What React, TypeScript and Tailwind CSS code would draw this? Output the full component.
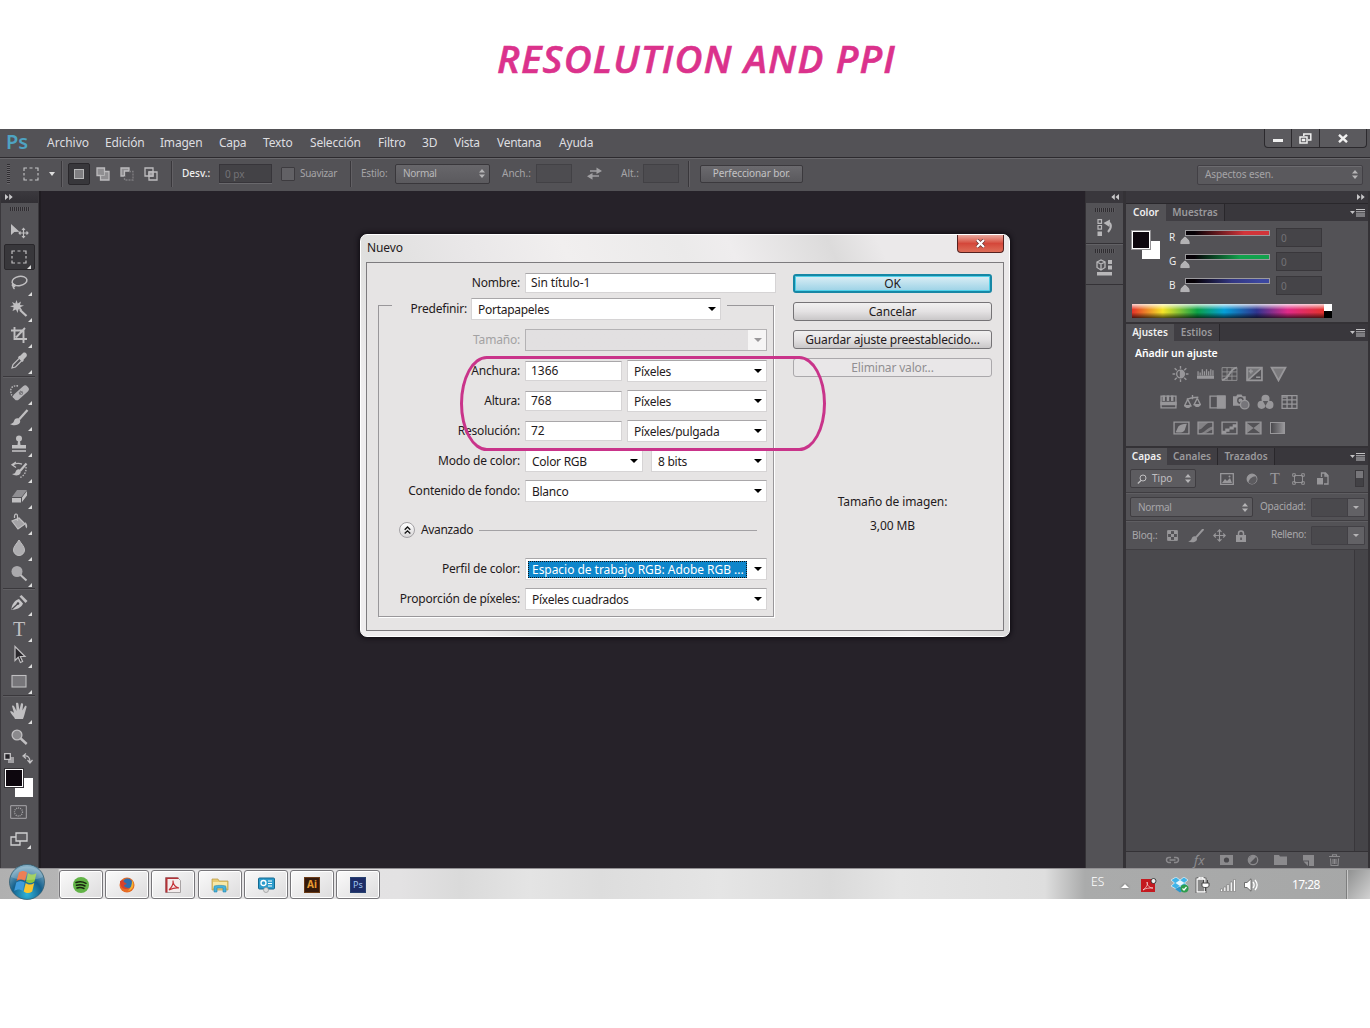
import React from "react";

type IconProps = { className?: string; box?: string; children: React.ReactNode };

/* Small line/fill icon that inherits the text colour. */
function Icon({ className = "w-5 h-5", box = "0 0 20 20", children }: IconProps) {
  return (
    <svg className={`shrink-0 ${className}`} viewBox={box} fill="none" stroke="currentColor" strokeWidth="1.3">
      {children}
    </svg>
  );
}

function Sorter() {
  return (
    <svg className="w-[6px] h-[9px] shrink-0 text-[#b5b4b6]" viewBox="0 0 6 9" fill="currentColor">
      <path d="M0 3.500L3 0l3 3.500zM0 5.500h6L3 9z" />
    </svg>
  );
}

function Chevrons({ left = false }: { left?: boolean }) {
  return (
    <svg className={`w-[8px] h-[6px] text-[#c9c8ca] ${left ? "rotate-180" : ""}`} viewBox="0 0 8 6" fill="currentColor">
      <path d="M0 0l3.500 3L0 6zM4.200 0l3.500 3-3.500 3z" />
    </svg>
  );
}

function Grip() {
  return <div className="h-[4px] w-[20px] bg-[repeating-linear-gradient(90deg,#2f2d31_0_1px,#5d5b5f_1px_2px)]" />;
}

function Rule() {
  return <div className="h-[26px] w-[2px] border-l border-[#39373b] border-r border-r-[#626064] box-border" />;
}

/* ---------- menu bar ---------- */

function MenuBar() {
  return (
    <div className="relative flex h-[28px] items-center bg-[#535256] text-[12px] text-[#dedee0]">
      <div className="w-[47px] pb-[2px] pl-[6px] text-[20px] leading-[24px] font-semibold text-[#4ea3c2] font-['Noto_Sans',sans-serif]">Ps</div>
      <div className="w-[58px]">Archivo</div>
      <div className="w-[55px] tracking-[-0.15px]">Edición</div>
      <div className="w-[59px] tracking-[-0.2px]">Imagen</div>
      <div className="w-[44px] tracking-[-0.3px]">Capa</div>
      <div className="w-[47px] tracking-[-0.15px]">Texto</div>
      <div className="w-[68px] tracking-[-0.2px]">Selección</div>
      <div className="w-[44px] tracking-[-0.2px]">Filtro</div>
      <div className="w-[32px]">3D</div>
      <div className="w-[43px] tracking-[-0.3px]">Vista</div>
      <div className="w-[62px] tracking-[-0.3px]">Ventana</div>
      <div className="tracking-[-0.2px]">Ayuda</div>
      <div className="ml-auto mr-[3px] flex h-[19px] self-start divide-x divide-[#2b292d] rounded-b-[4px] border border-t-0 border-[#2b292d] bg-[#5b5a5e] text-[#f1f1f1]">
        <div className="flex w-[27px] items-end justify-center pb-[5px]">
          <div className="h-[3px] w-[10px] bg-[#f1f1f1]" />
        </div>
        <div className="flex w-[28px] items-center justify-center">
          <Icon className="w-[13px] h-[11px]" box="0 0 13 11">
            <path d="M4.800 3V1h7v6H9M1 4h7v6H1zM3.500 6.500h2v1h-2z" strokeWidth="1.500" />
          </Icon>
        </div>
        <div className="flex w-[46px] items-center justify-center">
          <Icon className="w-[12px] h-[9px]" box="0 0 11 9">
            <path d="M1.500.8l8 7.400M9.500.8l-8 7.400" strokeWidth="2.400" />
          </Icon>
        </div>
      </div>
    </div>
  );
}

/* ---------- tool options bar ---------- */

function OptionsBar() {
  return (
    <div className="flex h-[34px] items-center border-t border-[#2d2b2f] bg-[#535256] pb-[2px] text-[10px] text-[#a5a4a7] shadow-[inset_0_1px_0_#68676b]">
      <div className="w-[17px] pl-[1px] ml-[6px]">
        <div className="h-[20px] w-[3px] bg-[repeating-linear-gradient(180deg,#2f2d31_0_1px,#68666a_1px_2px)]" />
      </div>
      <div className="w-[26px] text-[#c6c6c8]">
        <Icon className="w-[16px] h-[14px]" box="0 0 16 14">
          <path d="M1 4V1h3M6.500 1h3M12 1h3v3M15 6v2.500M15 10.500V13h-3M9.500 13h-3M4 13H1v-2.500M1 8.500V6" strokeWidth="1.100" />
        </Icon>
      </div>
      <div className="w-[12px]">
        <div className="h-0 w-0 border-x-[3px] border-t-[4px] border-x-transparent border-t-[#dedede]" />
      </div>
      <div className="w-[7px]"><Rule /></div>
      <div className="w-[28px]">
        <div className="flex h-[22px] w-[22px] items-center justify-center rounded-[2px] border border-[#29272b] bg-[#38373b]">
          <div className="h-[10px] w-[10px] border border-[#b8b8b9] bg-[#7f7e81]" />
        </div>
      </div>
      <div className="w-[24px] text-[#bdbcbe]">
        <Icon className="w-[14px] h-[14px]" box="0 0 14 14">
          <path d="M1 1h7.500v3.500H13V13H4.500V8.500H1z" fill="#8f8e91" />
          <path d="M8.500 4.500v4h-4" strokeWidth=".8" />
        </Icon>
      </div>
      <div className="w-[24px] text-[#bdbcbe]">
        <Icon className="w-[14px] h-[14px]" box="0 0 14 14">
          <path d="M1 1h8v3H4.500v5H1z" fill="#8f8e91" />
          <path d="M9 4.500h4V13H4.500V9" stroke="#7d7c7f" strokeDasharray="2 1" />
        </Icon>
      </div>
      <div className="w-[27px] text-[#bdbcbe]">
        <Icon className="w-[14px] h-[14px]" box="0 0 14 14">
          <path d="M1 1h8v8H1zM5 5h8v8H5z" />
          <path d="M5 5h4v4H5z" fill="#9c9b9e" />
        </Icon>
      </div>
      <div className="w-[11px]"><Rule /></div>
      <div className="w-[37px] font-medium text-[#f0f0f0]">Desv.:</div>
      <div className="w-[62px]">
        <div className="h-[19px] w-[53px] border border-[#37353a] bg-[#434246] pl-[5px] leading-[18px] text-[#737276] shadow-[0_1px_0_#69686c]">0 px</div>
      </div>
      <div className="w-[19px]">
        <div className="h-[14px] w-[14px] rounded-[1px] border border-[#3d3b3f] bg-[#626165]" />
      </div>
      <div className="w-[50px] tracking-[-0.3px]">Suavizar</div>
      <div className="w-[11px]"><Rule /></div>
      <div className="w-[34px] tracking-[-0.2px]">Estilo:</div>
      <div className="w-[107px]">
        <div className="flex h-[20px] w-[95px] items-center justify-between rounded-[2px] border border-[#39373b] bg-linear-to-b from-[#67666a] to-[#5b5a5e] pr-[4px] pl-[7px] text-[#b9b8ba]">
          <span className="tracking-[-0.3px]">Normal</span> <Sorter />
        </div>
      </div>
      <div className="w-[34px]">Anch.:</div>
      <div className="w-[51px]"><div className="h-[19px] w-[36px] border border-[#424145] bg-[#4d4c50]" /></div>
      <div className="w-[34px] text-[#a09fa2]">
        <Icon className="w-[15px] h-[13px]" box="0 0 15 13">
          <path d="M3 4h8M4 9h8" strokeWidth="1.600" />
          <path d="M9.500.5L15 4 9.500 7zM5.500 6L0 9.300l5.500 3.400z" fill="currentColor" stroke="none" />
        </Icon>
      </div>
      <div className="w-[22px]">Alt.:</div>
      <div className="w-[45px]"><div className="h-[19px] w-[36px] border border-[#424145] bg-[#4d4c50]" /></div>
      <div className="w-[12px]"><Rule /></div>
      <div className="h-[18px] w-[103px] rounded-[2px] border border-[#3b393d] bg-linear-to-b from-[#6b6a6e] to-[#5a595d] text-center leading-[15px] tracking-[-0.1px] text-[#c3c2c4]">
        Perfeccionar bor.
      </div>
      <div className="mt-[2px] mr-[7px] ml-auto flex h-[20px] w-[166px] items-center justify-between rounded-[2px] border border-[#424045] bg-[#5a595d] pr-[4px] pl-[7px] shadow-[inset_0_1px_0_#6c6b6f]">
        <span className="tracking-[-0.1px]">Aspectos esen.</span> <Sorter />
      </div>
    </div>
  );
}

/* ---------- toolbox ---------- */

const tools: Record<string, React.ReactNode> = {
  move: (
    <>
      <path d="M2 3v11l3.300-3 5.200-.3z" fill="currentColor" stroke="none" />
      <path d="M14.500 7.500v9M10 12h9M13 9l1.500-1.700L16 9M13 15l1.500 1.700L16 15M11.500 10.500L10 12l1.500 1.500M17.500 10.500L19 12l-1.500 1.500" strokeWidth="1.100" />
    </>
  ),
  marquee: <path d="M3 7V4h3M8.500 4h3M14 4h3v3M17 9v2.500M17 13.500V16h-3M11.500 16h-3M6 16H3v-2.500M3 11.500V9" strokeWidth="1.200" />,
  lasso: (
    <>
      <ellipse cx="10.500" cy="8" rx="7.500" ry="4.600" transform="rotate(-10 10.500 8)" strokeWidth="1.500" />
      <path d="M4.500 10.500c-2 1-1.500 3 .5 3s1-2.500-.5-2c-1 1.500-.5 3 1 4.500" />
    </>
  ),
  wand: (
    <>
      <path d="M7.500 1l1.200 3.500L12 2.500l-1 3.400 4 .6-3.700 1.800 2 3.200-3.800-1.300L8.500 14 7 10.500 3.500 12l1.300-3.500L1 7.300l3.800-1L3 3l3.300 1.600z" fill="currentColor" stroke="none" />
      <path d="M11 11l6.500 6" strokeWidth="2.200" />
    </>
  ),
  crop: <path d="M5.500 2v12H18M2 5.500h12.500V18M7 12.500l9-9.500" strokeWidth="1.900" />,
  dropper: (
    <>
      <path d="M3 17l1-3.500 6.500-6.500 2.500 2.500L6.500 16z" strokeWidth="1.200" />
      <path d="M10 5l1.200-.2L14 2c2-1.500 5 1.200 3.500 3.500L14.700 8.500l-.2 1.500-1.400 1L9 6.500z" fill="currentColor" stroke="none" />
    </>
  ),
  heal: (
    <>
      <rect x="3" y="7.300" width="18" height="7" rx="3" transform="rotate(-42 12 10.800)" fill="#b5b4b7" stroke="none" />
      <circle cx="12" cy="10.800" r="2.200" fill="#7b7a7e" stroke="none" />
      <path d="M10.500 9.500l3 3M12.500 8.500l1.500 1.500" stroke="#d6d5d7" strokeWidth=".8" strokeDasharray="1 1.200" />
      <path d="M9 4C5 3 1.500 5 1.800 9c0 3 1 5 3.200 6.500" strokeDasharray="1.500 1.200" />
    </>
  ),
  brush: (
    <>
      <path d="M18.500 2L10 11.500" strokeWidth="2.300" />
      <path d="M9.500 10.500c-2.500-.7-4 .7-4.500 2.500S3 15.800 1 16c3 2 8.500 1.700 10-1.500.5-1.500 0-3-1.500-4z" fill="currentColor" stroke="none" />
    </>
  ),
  stamp: (
    <>
      <circle cx="10" cy="4.500" r="3" fill="currentColor" stroke="none" />
      <path d="M9 7h2l.5 4H17v3.500H3V11h5.500z" fill="currentColor" stroke="none" />
      <path d="M3 17h14" strokeWidth="1.600" />
    </>
  ),
  history: (
    <>
      <path d="M17.500 3.500L11 11" strokeWidth="2.200" />
      <path d="M10.500 9.500c-2-.5-3.300.5-3.900 2.200-.4 1.500-1.600 2.200-3.600 2.300 2.500 2 7 2 8.500-.8.500-1.500.2-2.700-1-3.700z" fill="currentColor" stroke="none" />
      <path d="M4 5c3-2 6-2 9-.8M7 2L3 4.800 7 7.500" />
      <path d="M17 7c.5 5-2 9-6 10.500" strokeDasharray="1.500 1.300" />
    </>
  ),
  eraser: (
    <>
      <path d="M8 4h10l-5.500 7H3z" fill="#8f8e92" stroke="none" />
      <path d="M3 12h9v4.500H3zM13 11.500L18 5v4.500l-5 6.500z" fill="currentColor" stroke="none" />
    </>
  ),
  bucket: (
    <>
      <path d="M3 9l7-3 6 6-7 5z" fill="#a4a3a6" stroke="none" />
      <path d="M8.500 9V4.500c0-4-3.500-3-3 1.500M10 6l6 6-7 5-6-8z" strokeWidth="1.200" />
      <path d="M16 10c2 1.500 3 4 1.500 6.500-1-1-1.500-3-1.500-6.500z" fill="currentColor" stroke="none" />
    </>
  ),
  drop: <path d="M10 2c2.500 4.200 5.500 6.500 5.500 10a5.500 5.500 0 01-11 0c0-3.500 3-5.800 5.500-10z" fill="#aeadb0" strokeWidth="1" />,
  dodge: (
    <>
      <circle cx="8" cy="7.500" r="5.500" fill="#aaa9ac" stroke="none" />
      <path d="M11.500 11l6 5.500" strokeWidth="2" />
    </>
  ),
  pen: (
    <>
      <path d="M2 17c1-5 2.500-9 8-11l4 4.500c-2 5-7 6-12 6.500z" fill="#c6c5c7" stroke="none" />
      <path d="M2.500 16.500L9 10.500" stroke="#4a494d" strokeWidth="1.200" />
      <circle cx="9" cy="10.500" r="1.300" fill="#4a494d" stroke="none" />
      <path d="M10.500 3.500l6 6.500 2-2-6-6z" fill="currentColor" stroke="none" />
    </>
  ),
  path: <path d="M6 1.500v14l3.200-3.200 2.200 5.200 2.200-1-2.300-5H16z" fill="#29272b" strokeWidth="1.200" />,
  rect: <rect x="3" y="4.500" width="14" height="11.500" fill="#77767a" strokeWidth="1.100" />,
  hand: (
    <path d="M6 18c-.7-2.500-3.500-4-5-7.500 1.200-.8 2.500-.2 4 1.500L3 5c.9-.8 1.800-.3 2.200.6L7.500 10 7 2.300c.8-.8 2.200-.5 2.400.5L10.400 9 12 2.500c.9-.6 2.100 0 2.100 1L13.400 9.500 16 5c1-.5 1.900.3 1.500 1.300C16.300 10 15.500 14.500 14 18z" fill="currentColor" stroke="none" />
  ),
  zoom: (
    <>
      <circle cx="8" cy="8" r="4.900" fill="#8b8a8d" strokeWidth="1.300" />
      <path d="M11.700 11.500l6 5.500" strokeWidth="2.400" />
    </>
  ),
};

function Tool({ name, corner = true, active = false }: { name: string; corner?: boolean; active?: boolean }) {
  return (
    <div className={`relative flex h-[26px] w-[31px] items-center justify-center text-[#c0bfc1] ${active ? "rounded-[2px] border border-[#29272b] bg-[#38373b]" : ""}`}>
      {name === "type" ? (
        <span className="font-['Liberation_Serif',serif] text-[20px] leading-5">T</span>
      ) : (
        <Icon className="w-[20px] h-[20px]">{tools[name]}</Icon>
      )}
      {corner && <div className="absolute right-[3px] bottom-[0px] h-0 w-0 border-b-[4px] border-l-[4px] border-b-[#dddddd] border-l-transparent" />}
    </div>
  );
}

function ToolRule({ className }: { className: string }) {
  return (
    <div className={`flex items-center ${className}`}>
      <div className="h-[2px] w-[32px] border-b border-[#3c3a3e] border-b-[#5f5e62] bg-[#3a383c]" />
    </div>
  );
}

function Toolbox() {
  return (
    <div className="flex w-[39px] flex-col border-r border-l border-[#3a383c] bg-[#535256]">
      <div className="flex h-[12px] items-center bg-linear-to-b from-[#3b393e] to-[#323035] pl-[4px]"><Chevrons /></div>
      <div className="flex h-[15px] items-start justify-center pt-[4px]"><Grip /></div>
      <div className="flex flex-col items-center pr-[1px]">
        <Tool name="move" corner={false} />
        <Tool name="marquee" active />
        <Tool name="lasso" />
        <Tool name="wand" />
        <Tool name="crop" />
        <Tool name="dropper" />
        <ToolRule className="h-[5px]" />
        <Tool name="heal" />
        <Tool name="brush" />
        <Tool name="stamp" />
        <Tool name="history" />
        <Tool name="eraser" />
        <Tool name="bucket" />
        <Tool name="drop" />
        <Tool name="dodge" />
        <ToolRule className="h-[3px]" />
        <Tool name="pen" />
        <Tool name="type" />
        <Tool name="path" />
        <Tool name="rect" />
        <ToolRule className="h-[4px]" />
        <Tool name="hand" />
        <Tool name="zoom" corner={false} />
      </div>
      <div className="flex h-[16px] items-center justify-between pr-[5px] pl-[3px] text-[#c4c3c5]">
        <Icon className="w-[10px] h-[10px]" box="0 0 10 10">
          <path d="M4 4h6v6H4z" fill="#a09fa2" stroke="none" />
          <path d="M.7.7h5.600v5.600H.7z" fill="#252328" />
        </Icon>
        <Icon className="w-[11px] h-[11px]" box="0 0 11 11">
          <path d="M2 3c4-.5 6 1.500 6 6M4 .5L1 3l3 2.500M5.500 7L8 10l2.500-3" strokeWidth="1.200" />
        </Icon>
      </div>
      <div className="relative h-[34px]">
        <div className="absolute top-[12px] left-[14px] h-[19px] w-[18px] bg-white" />
        <div className="absolute top-[3px] left-[4px] h-[18px] w-[18px] border border-white bg-[#0d070e] outline outline-[#333135]" />
      </div>
      <div className="flex flex-col items-center gap-[13px] pt-[5px] pr-[2px] text-[#a8a7aa]">
        <Icon className="w-[17px] h-[14px]" box="0 0 17 14">
          <path d="M.7.7h15.600v12.600H.7z" strokeWidth="1" />
          <circle cx="8.500" cy="7" r="4" strokeDasharray="1 1" strokeWidth="1.300" />
        </Icon>
        <div className="relative">
          <Icon className="w-[18px] h-[14px]" box="0 0 18 14">
            <path d="M1 5h9v8H1z" stroke="#d0d0d1" />
            <path d="M6 1h11v8H6z" fill="#5d5c60" stroke="#d0d0d1" />
          </Icon>
          <div className="absolute -right-[3px] -bottom-[3px] h-0 w-0 border-b-[4px] border-l-[4px] border-b-[#dddddd] border-l-transparent" />
        </div>
      </div>
    </div>
  );
}

/* ---------- right dock ---------- */

function Dock() {
  return (
    <div className="ml-[2px] flex w-[40px] flex-col border-r-2 border-l border-[#343236] bg-[#535256]">
      <div className="flex h-[12px] items-center justify-end bg-[#39373c] pr-[4px]"><Chevrons left /></div>
      <div className="flex h-[41px] flex-col items-center border-b border-[#343236] pt-[5px] text-[#b8b7b9]">
        <Grip />
        <Icon className="mt-[7px] w-[18px] h-[17px]" box="0 0 18 17">
          <path d="M2 .7h3.500v3.600H2zM2 6.500h3.500v3.600H2z" strokeWidth="1.200" />
          <path d="M1.500 12.500h4.500V17H1.500zM14 .5L7.500 4l6 4z" fill="currentColor" stroke="none" />
          <path d="M11 3.500c5 0 5 5 1 9.500" strokeWidth="2" />
        </Icon>
      </div>
      <div className="flex h-[41px] flex-col items-center border-t border-t-[#626165] border-b border-b-[#343236] pt-[4px] text-[#b8b7b9]">
        <Grip />
        <Icon className="mt-[6px] w-[17px] h-[17px]" box="0 0 17 17">
          <path d="M1 3l4-2 4 2v5.500L5 11 1 8.500zM1 3l4 2 4-2M5 5v6" />
          <path d="M12 1h4v4h-4zM12 6.500h4v4h-4zM1 13h15v3.500H1z" fill="currentColor" stroke="none" />
        </Icon>
      </div>
    </div>
  );
}

function PanelMenu() {
  return (
    <svg className="mr-[3px] ml-auto h-[8px] w-[15px] text-[#c2c1c3]" viewBox="0 0 15 8">
      <path d="M0 2h5L2.500 5zM6 0h9v1H6zM6 2.200h9v1H6zM6 4.400h9v1H6zM6 6.600h9v1H6z" fill="currentColor" />
    </svg>
  );
}

function Tabs({ first, firstClass, rest }: { first: string; firstClass: string; rest: { label: string; className: string }[] }) {
  return (
    <div className="flex h-[17px] items-center bg-[#39373c] text-[10px] font-semibold text-[#9b9a9d]">
      <div className={`flex h-full items-center justify-center bg-[#535256] text-[#f0f0f0] ${firstClass}`}>{first}</div>
      {rest.map((t) => (
        <div key={t.label} className={`flex h-full items-center justify-center border-r border-[#29272b] bg-[#403e43] ${t.className}`}>{t.label}</div>
      ))}
      <PanelMenu />
    </div>
  );
}

function Channel({ name, bar }: { name: string; bar: string }) {
  return (
    <div className="flex h-[24px] items-center">
      <div className="w-[11px] pb-[1px] text-[10px] text-[#eeeeee]">{name}</div>
      <div className="relative ml-[5px] h-[18px] w-[85px]">
        <div className={`mt-[1px] h-[6px] border border-[#9b9a9d] ${bar}`} />
        <svg className="absolute top-[7px] -left-[5px] h-[9px] w-[10px]" viewBox="0 0 10 9">
          <path d="M5 0c1.500 1.500 5 4 5 6v2.500H0V6c0-2 3.500-4.500 5-6z" fill="#b3b2b4" stroke="#3c3a3e" strokeWidth=".6" />
        </svg>
      </div>
      <div className="-mt-[1px] ml-[6px] h-[19px] w-[46px] border border-[#39373b] bg-[#454448] pl-[4px] text-[10px] leading-[18px] text-[#737276]">0</div>
    </div>
  );
}

function ColorPanel() {
  return (
    <div className="h-[118px]">
      <Tabs first="Color" firstClass="w-[40px]" rest={[{ label: "Muestras", className: "w-[59px]" }]} />
      <div className="flex h-[79px] pt-[5px]">
        <div className="relative w-[43px]">
          <div className="absolute top-[15px] left-[16px] h-[18px] w-[18px] bg-white" />
          <div className="absolute top-[5px] left-[6px] h-[18px] w-[18px] border border-white bg-[#0d070e] outline outline-[#929194]" />
        </div>
        <div>
          <Channel name="R" bar="bg-[linear-gradient(90deg,#050005_10%,#d2353a_70%)]" />
          <Channel name="G" bar="bg-[linear-gradient(90deg,#050005_10%,#12a24d_65%)]" />
          <Channel name="B" bar="bg-[linear-gradient(90deg,#050005_10%,#323682_55%,#3c47a0_90%)]" />
        </div>
      </div>
      <div className="ml-[6px] mt-[4px] flex h-[14px] w-[200px]">
        <div className="flex-1 bg-[linear-gradient(180deg,#ffffffcc_0%,#ffffff00_40%,#00000000_60%,#000000aa_100%),linear-gradient(90deg,#e63328,#f6e528_16%,#0ba147_34%,#04a0d8_48%,#30348f_65%,#e02a88_81%,#e5322c)]" />
        <div className="w-[8px]">
          <div className="h-[7px] bg-white" />
          <div className="h-[7px] bg-black" />
        </div>
      </div>
    </div>
  );
}

const frame = <path d="M1 2h14v11H1z" />;

function AdjustIcon({ children }: { children: React.ReactNode }) {
  return (
    <Icon className="w-[17px] h-[16px]" box="0 0 16 15">
      {children}
    </Icon>
  );
}

function AdjustPanel() {
  return (
    <div className="h-[122px]">
      <Tabs first="Ajustes" firstClass="w-[48px]" rest={[{ label: "Estilos", className: "w-[46px]" }]} />
      <div className="pt-[5px] pl-[9px] text-[10.500px] leading-[14px] font-semibold tracking-[-0.1px] text-white">Añadir un ajuste</div>
      <div className="mt-[6px] ml-[46px] flex gap-[7.500px] text-[#98979a]">
        <AdjustIcon>
          <circle cx="8" cy="7.500" r="3.600" />
          <path d="M8 4.300a3.200 3.200 0 010 6.400z" fill="currentColor" />
          <path d="M8 0v2.500M8 12.500V15M.5 7.500H3M13 7.500h2.500M2.500 2l2 2M11.500 11l2 2M13.500 2l-2 2M4.500 11l-2 2" />
        </AdjustIcon>
        <AdjustIcon>
          <path d="M0 9h16v3H0z" fill="currentColor" stroke="none" />
          <path d="M1 9V5M3 9V6M5 9V3M7 9V5M9 9V3M11 9V5M13 9V3M15 9V4" strokeWidth="1.200" />
        </AdjustIcon>
        <AdjustIcon>
          <path d="M1 1.500h14v12H1zM1 5.500h14M1 9.500h14M5.700 1.500v12M10.300 1.500v12" strokeWidth=".8" />
          <path d="M1 13c7 0 7-11 14-11.500" strokeWidth="1.800" />
        </AdjustIcon>
        <AdjustIcon>
          <path d="M1 1.500h14v12H1z" strokeWidth="1.600" />
          <path d="M1 1.500h14L1 13.500z" fill="currentColor" stroke="none" opacity=".5" />
          <path d="M2.500 5h4M4.500 3v4M9.500 10.500h4M2 13L14.500 2" strokeWidth="1.500" />
        </AdjustIcon>
        <AdjustIcon><path d="M1.500 1.500h13L8 13.500z" fill="#7b7a7d" strokeWidth="1.700" /></AdjustIcon>
      </div>
      <div className="mt-[12px] ml-[34px] flex gap-[7.300px] text-[#98979a]">
        <AdjustIcon>
          {frame}
          <path d="M1 8h14v2H1zM4 2v4H3V2zM8 2v4H7V2zM12 2v4h-1V2z" fill="currentColor" />
        </AdjustIcon>
        <AdjustIcon>
          <path d="M8 1v4M2.500 5l5-1.500L13.500 3M3.500 5l-3 6h6zM12.500 4l-3 6h6z" />
          <path d="M.5 11h6c-.5 3-5.500 3-6 0zM9.500 10h6c-.5 3-5.500 3-6 0z" fill="currentColor" stroke="none" />
        </AdjustIcon>
        <AdjustIcon>
          {frame}
          <path d="M8 2h7v11H8z" fill="currentColor" />
        </AdjustIcon>
        <AdjustIcon>
          <path d="M0 2h3l1-1.500h4L9 2h3v5H7v4H0z" fill="currentColor" stroke="none" />
          <circle cx="7" cy="6" r="2.500" stroke="#535256" />
          <circle cx="11" cy="10" r="4" fill="#76757a" />
        </AdjustIcon>
        <AdjustIcon>
          <circle cx="8" cy="4.500" r="3.800" fill="currentColor" stroke="none" />
          <circle cx="4.300" cy="10.200" r="3.800" fill="currentColor" stroke="none" />
          <circle cx="11.700" cy="10.200" r="3.800" fill="currentColor" stroke="none" />
          <path d="M5.500 6.500h5L8 11z" fill="#59585c" stroke="none" />
        </AdjustIcon>
        <AdjustIcon><path d="M1 1.500h14v12H1zM1 5.500h14M1 9.500h14M5.700 1.500v12M10.300 1.500v12M1 3h4" strokeWidth="1.200" /></AdjustIcon>
      </div>
      <div className="mt-[10px] ml-[47px] flex gap-[7px] text-[#98979a]">
        <AdjustIcon>{frame}<path d="M2.500 11.500L5 6c2-2 4-2 8-2.500l-2 6c-2 2.500-5 2.500-8.500 2z" fill="currentColor" stroke="none" /></AdjustIcon>
        <AdjustIcon>{frame}<path d="M1 9c5 0 6-6 12-7H1zM1 13c7-1 8-6 14-7v3c-4 1-5 3-8 4z" fill="currentColor" stroke="none" opacity=".7" /></AdjustIcon>
        <AdjustIcon>{frame}<path d="M1 10h3V8h4V6h3V4h4v3h-3v2H8v2H5v2H1z" fill="currentColor" stroke="none" /></AdjustIcon>
        <AdjustIcon>{frame}<path d="M1 2l7 5.500L1 13zM15 2v11L8 7.500z" fill="currentColor" stroke="none" opacity=".8" /></AdjustIcon>
        <div className="mt-[2px] ml-[1px] h-[12px] w-[15px] border border-[#98979a] bg-linear-to-r from-[#4a494d] to-[#98979a]" />
      </div>
    </div>
  );
}

function ValueField() {
  return (
    <div className="flex h-[19px] w-[54px] rounded-[1px] border border-[#424045] bg-[#4a494d]">
      <div className="ml-auto flex w-[17px] items-center justify-center border-l border-[#424045] bg-[#626165]">
        <div className="h-0 w-0 border-x-[3px] border-t-[3px] border-x-transparent border-t-[#b5b4b6]" />
      </div>
    </div>
  );
}

function LayersPanel() {
  return (
    <div className="flex flex-1 flex-col text-[10px] text-[#a8a7aa]">
      <Tabs first="Capas" firstClass="w-[41px]" rest={[{ label: "Canales", className: "w-[51px]" }, { label: "Trazados", className: "w-[57px]" }]} />
      <div className="flex h-[28px] items-center border-b border-[#3f3d41] pl-[4px]">
        <div className="flex h-[19px] w-[66px] items-center rounded-[2px] border border-[#3f3d41] bg-[#5d5c60] pr-[4px] pl-[6px] text-[#c0bfc1]">
          <Icon className="mr-[5px] w-[10px] h-[10px]" box="0 0 10 10"><circle cx="6" cy="4" r="3" strokeWidth="1" /><path d="M4 6.500L.8 9.500" /></Icon>
          Tipo
          <span className="ml-auto flex"><Sorter /></span>
        </div>
        <div className="ml-[24px] flex w-[109px] items-center justify-between text-[#98979a]">
          <Icon className="w-[14px] h-[12px]" box="0 0 14 12"><path d="M.7.7h12.600v10.600H.7z" /><path d="M2 10l3-4 2 2 3-3 2 5z" fill="currentColor" stroke="none" /><circle cx="9.500" cy="3.500" r="1" fill="currentColor" stroke="none" /></Icon>
          <Icon className="w-[12px] h-[12px]" box="0 0 12 12"><circle cx="6" cy="6" r="4.800" fill="#98979a" /><path d="M2.500 9.500C3 6 6 3.500 9.500 3.200a4.500 4.500 0 01-7 6.300z" fill="#5c5b5f" stroke="none" /></Icon>
          <span className="font-['Liberation_Serif',serif] text-[16px] leading-4">T</span>
          <Icon className="w-[13px] h-[12px]" box="0 0 13 12"><path d="M2.500 2.500h8v7h-8zM.7.7h2.600v2.600H.7zM9.700.7h2.600v2.600H9.700zM.7 8.700h2.600v2.600H.7zM9.700 8.700h2.600v2.600H9.700z" strokeWidth=".9" /></Icon>
          <Icon className="w-[12px] h-[13px]" box="0 0 12 13"><path d="M4.500 5V1h4L11 3.500V12H7M8 1v3h3" /><path d="M0 6h6v6.500H0z" fill="currentColor" stroke="none" /></Icon>
        </div>
        <div className="mr-[4px] ml-auto h-[17px] w-[9px] border border-[#3a383c] bg-linear-to-b from-[#77767a] from-45% to-[#424145] to-50%" />
      </div>
      <div className="flex h-[28px] items-center border-t border-b border-t-[#5f5e62] border-b-[#3f3d41] pl-[4px]">
        <div className="flex h-[20px] w-[123px] items-center justify-between rounded-[2px] border border-[#3f3d41] bg-[#5d5c60] pr-[4px] pl-[7px]"><span className="tracking-[-0.3px]">Normal</span> <Sorter /></div>
        <div className="w-[58px] pb-[2px] pl-[7px] tracking-[-0.2px]">Opacidad:</div>
        <ValueField />
      </div>
      <div className="flex h-[29px] items-center border-t border-b border-t-[#5f5e62] border-b-[#3f3d41] pl-[6px]">
        <div className="w-[35px] tracking-[-0.2px]">Bloq.:</div>
        <div className="flex w-[79px] items-center justify-between text-[#98979a]">
          <Icon className="w-[11px] h-[11px]" box="0 0 11 11"><path d="M.6.6h9.800v9.800H.6z" strokeWidth="1" /><path d="M1 1h3v3H1zM7 1h3v3H7zM4 4h3v3H4zM1 7h3v3H1zM7 7h3v3H7z" fill="currentColor" stroke="none" /></Icon>
          <Icon className="w-[16px] h-[14px]" box="1 2 18 16">{tools.brush}</Icon>
          <Icon className="w-[13px] h-[13px]" box="0 0 13 13"><path d="M6.500 1v11M1 6.500h11M4.500 2.800l2-2 2 2M4.500 10.200l2 2 2-2M2.800 4.500l-2 2 2 2M10.200 4.500l2 2-2 2" strokeWidth="1.100" /></Icon>
          <Icon className="w-[10px] h-[12px]" box="0 0 10 12"><path d="M2.500 6V3.500c0-3.300 5-3.300 5 0V6" strokeWidth="1.500" /><path d="M0 5h10v7H0z" fill="currentColor" stroke="none" /><path d="M4.300 7.500h1.500v2.500H4.300z" fill="#535256" stroke="none" /></Icon>
        </div>
        <div className="ml-[25px] w-[40px] pb-[3px] tracking-[-0.3px]">Relleno:</div>
        <div className="-mt-[1px]"><ValueField /></div>
      </div>
      <div className="flex-1 bg-[#4a494d]">
        <div className="ml-auto h-full w-[14px] border-l border-[#39373b] bg-[#454448]" />
      </div>
      <div className="flex h-[17px] items-center gap-[14px] border-t border-[#343236] pl-[39px] text-[#8b8a8d]">
        <Icon className="w-[15px] h-[8px]" box="0 0 15 8"><path d="M6 6.500H4a2.500 2.500 0 010-5h2M9 1.500h2a2.500 2.500 0 010 5H9M4.500 4h6" strokeWidth="1.500" /></Icon>
        <span className="w-[12px] font-['Noto_Sans',sans-serif] text-[13px] leading-3 italic">fx</span>
        <Icon className="w-[13px] h-[10px]" box="0 0 13 10"><path d="M0 0h13v10H0z" fill="currentColor" stroke="none" /><circle cx="6.500" cy="5" r="2.600" fill="#49484c" stroke="none" /></Icon>
        <Icon className="w-[12px] h-[12px]" box="0 0 12 12"><circle cx="6" cy="6" r="4.700" /><path d="M2.500 9.500L9.500 2.500A5 5 0 002.500 9.500z" fill="currentColor" stroke="none" /></Icon>
        <Icon className="ml-[1px] w-[13px] h-[10px]" box="0 0 13 10"><path d="M0 0h5l1 1.500h7V10H0z" fill="currentColor" stroke="none" /></Icon>
        <Icon className="ml-[2px] w-[11px] h-[11px]" box="0 0 11 11"><path d="M0 0h11v11H6V5.500H0zM.5 6.500H5V11z" fill="currentColor" stroke="none" /></Icon>
        <Icon className="ml-[1px] w-[11px] h-[12px]" box="0 0 11 12"><path d="M0 2.500h11M3.500 2V.7h4V2M1.500 4.500l.5 7h7l.5-7M4 5v5M5.500 5v5M7 5v5" strokeWidth="1.100" /></Icon>
      </div>
    </div>
  );
}

function Panels() {
  return (
    <div className="flex w-[245px] flex-col border-r-2 border-l border-[#343236] bg-[#535256]">
      <div className="flex h-[12px] items-center justify-end bg-[#39373c] pr-[3px]"><Chevrons /></div>
      <div className="border-t border-[#29272b]"><ColorPanel /></div>
      <div className="border-t-2 border-[#343236]"><AdjustPanel /></div>
      <div className="h-[2px] bg-[#343236]" />
      <LayersPanel />
    </div>
  );
}

/* ---------- new document dialog ---------- */

function Label({ children, dim = false, className = "" }: { children: React.ReactNode; dim?: boolean; className?: string }) {
  return <div className={`mr-[5px] pb-[1px] text-right tracking-[-0.2px] whitespace-nowrap ${dim ? "text-[#a3a2a3]" : ""} ${className}`}>{children}</div>;
}

function Row({ label, dim, className = "", children }: { label: string; dim?: boolean; className?: string; children: React.ReactNode }) {
  return (
    <div className={`flex h-[22px] items-center ${className}`}>
      <Label dim={dim} className="w-[142px]">{label}</Label>
      {children}
    </div>
  );
}

function Input({ children, className }: { children: React.ReactNode; className: string }) {
  return <div className={`h-[20px] border border-[#d6d4d5] border-t-[#a9a7a9] bg-white pl-[5px] leading-[18px] ${className}`}>{children}</div>;
}

function Select({ children, className, dim = false }: { children?: React.ReactNode; className: string; dim?: boolean }) {
  return (
    <div className={`flex h-[22px] items-center justify-between border pr-[4px] ${dim ? "border-[#b4b2b4] bg-linear-to-l from-[#f6f5f5] from-[18px] to-[#e2e0e1] to-[18px]" : "border-[#d6d4d5] border-t-[#a9a7a9] bg-white"} ${className}`}>
      <span className="pt-[2px] pl-[6px] tracking-[-0.27px] whitespace-nowrap">{children}</span>
      <div className={`h-0 w-0 border-x-[4px] border-t-[4px] border-x-transparent ${dim ? "border-t-[#9a989a]" : "border-t-black"}`} />
    </div>
  );
}

function Button({ children, className }: { children: React.ReactNode; className: string }) {
  return <div className={`h-[19px] rounded-[3px] border text-center tracking-[-0.17px] ${className}`}>{children}</div>;
}

function Dialog() {
  return (
    <div className="absolute top-[234px] left-[360px] flex h-[403px] w-[650px] flex-col rounded-[7px] border border-white bg-[linear-gradient(65deg,#efedee_0%,#efedee_14%,#dfdfde_22%,#e9e7e8_34%,#f1efef_46%,#ebeaea_60%,#efedee_66%,#dcdbdb_78%,#ebe9ea_84%)] px-[5px] pb-[5px] text-[12px] text-[#1f1a20] shadow-[0_0_5px_1px_#0d0a10]">
      <div className="flex h-[27px] justify-between pl-[1px]">
        <div className="pt-[4px] tracking-[-0.1px]">Nuevo</div>
        <div className="flex h-[18px] w-[47px] items-center justify-center rounded-b-[4px] border border-t-0 border-[#54211f] bg-linear-to-b from-[#e7a79e] via-[#d4473a] via-50% to-[#dd6c58]">
          <svg className="h-[9px] w-[11px]" viewBox="0 0 11 9"><path d="M2 1l7 7M9 1L2 8" stroke="#6b3432" strokeWidth="3.600" /><path d="M2 1l7 7M9 1L2 8" stroke="#fff" strokeWidth="2.200" /></svg>
        </div>
      </div>
      <div className="flex flex-1 border border-[#7d7b7e] bg-[#e6e4e4]">
        <div className="ml-[11px] w-[398px] pt-[10px]">
          <div className="flex h-[20px] items-center">
            <Label className="w-[142px]">Nombre:</Label>
            <Input className="w-[251px]"><span className="tracking-[-0.1px]">Sin título-1</span></Input>
          </div>
          <div className="mt-[12px] h-[312px] w-[396px] border-r border-b border-l border-[#99979a] shadow-[1px_1px_0_#fff]">
            <div className="flex">
              <div className="h-px w-[13px] bg-[#99979a]" />
              <div className="-mt-[7px] flex h-[22px] items-center">
                <Label className="w-[75px]">Predefinir:</Label>
                <Select className="-ml-px w-[250px]">Portapapeles</Select>
              </div>
              <div className="ml-auto h-px w-[46px] bg-[#99979a]" />
            </div>
            <div className="-ml-px">
              <Row className="mt-[9px]" label="Tamaño:" dim><Select className="w-[242px]" dim /></Row>
              <Row className="mt-[9px]" label="Anchura:"><Input className="mr-[5px] w-[97px]">1366</Input><Select className="w-[140px]">Píxeles</Select></Row>
              <Row className="mt-[8px]" label="Altura:"><Input className="mr-[5px] w-[97px]">768</Input><Select className="w-[140px]">Píxeles</Select></Row>
              <Row className="mt-[8px]" label="Resolución:"><Input className="mr-[5px] w-[97px]">72</Input><Select className="w-[140px]">Píxeles/pulgada</Select></Row>
              <Row className="mt-[8px]" label="Modo de color:"><Select className="mr-[8px] w-[118px]">Color RGB</Select><Select className="w-[116px]">8 bits</Select></Row>
              <Row className="mt-[8px]" label="Contenido de fondo:"><Select className="w-[242px]">Blanco</Select></Row>
              <div className="mt-[17px] flex h-[22px] items-center pr-[16px] pl-[21px]">
                <div className="mr-[6px] flex h-[16px] w-[16px] items-center justify-center rounded-full border border-[#a3a1a4] bg-linear-to-b from-white to-[#d9d7d8]">
                  <svg className="h-[8px] w-[7px]" viewBox="0 0 7 8" fill="none" stroke="#111" strokeWidth="1.300"><path d="M.7 3.700l2.800-2.700 2.800 2.700M.7 7.500l2.800-2.700 2.800 2.700" /></svg>
                </div>
                <span className="tracking-[-0.35px]">Avanzado</span>
                <div className="ml-[6px] h-px flex-1 bg-[#a3a1a4]" />
              </div>
              <div className="mt-[17px] flex h-[22px] items-center">
                <Label className="w-[142px]">Perfil de color:</Label>
                <div className="flex h-[22px] w-[242px] items-center justify-between border border-[#d6d4d5] border-t-[#a9a7a9] bg-white pr-[4px] pl-[2px]">
                  <div className="h-[17px] w-[219px] border border-dotted border-[#111111] bg-[#0e86cb] pl-[3px] leading-[16px] tracking-[-0.04px] whitespace-nowrap text-white">Espacio de trabajo RGB: Adobe RGB ...</div>
                  <div className="h-0 w-0 border-x-[4px] border-t-[4px] border-x-transparent border-t-black" />
                </div>
              </div>
              <Row className="mt-[8px]" label="Proporción de píxeles:"><Select className="w-[242px]">Píxeles cuadrados</Select></Row>
            </div>
          </div>
        </div>
        <div className="ml-[17px] flex w-[199px] flex-col pt-[11px]">
          <Button className="border-2 border-[#1787a5] bg-linear-to-b from-[#dceef5] to-[#9bd2e6] leading-[15px] shadow-[inset_0_0_0_1px_#4fd0e8]">OK</Button>
          <Button className="mt-[9px] border-[#757376] bg-linear-to-b from-[#f1f0f0] via-[#e4e2e3] via-50% to-[#c9c7c8] leading-[18px]">Cancelar</Button>
          <Button className="mt-[9px] border-[#757376] bg-linear-to-b from-[#f1f0f0] via-[#e4e2e3] via-50% to-[#c9c7c8] leading-[18px]">Guardar ajuste preestablecido...</Button>
          <Button className="mt-[9px] border-[#aaa8ab] bg-[#e9e7e8] leading-[18px] text-[#918f92]">Eliminar valor...</Button>
          <div className="mt-[113px] text-center leading-[24px] tracking-[-0.1px]">Tamaño de imagen:<br />3,00 MB</div>
        </div>
      </div>
    </div>
  );
}

/* ---------- taskbar ---------- */

function TaskButton({ className = "", children }: { className?: string; children: React.ReactNode }) {
  return (
    <div className={`flex h-[29px] w-[44px] items-center justify-center rounded-[3px] border border-[#77767a] bg-linear-to-br from-[#fafafa] to-[#dddcdd] shadow-[inset_0_0_0_1px_#fff] ${className}`}>
      {children}
    </div>
  );
}

function Taskbar() {
  return (
    <div className="flex h-[31px] items-start border-t border-[#929093] bg-[linear-gradient(90deg,#b0b0b0_0,#b5b5b5_58px,#e6e5e6_60px,#e3e2e3_400px,#dadada_460px,#e4e4e4_530px,#dddddd_600px,#e5e5e5_720px,#dadada_830px,#e5e5e5_900px,#dedede_1045px,#aaabab_1085px,#a6a7a7_1370px)] pt-[1px]">
      <div className="relative w-[59px]">
        <svg className="absolute -top-[6px] left-[8px] h-[36px] w-[38px]" viewBox="0 0 38 36">
          <defs>
            <radialGradient id="orb" cx=".5" cy=".85" r=".85">
              <stop offset="0" stopColor="#2fb4d8" />
              <stop offset=".5" stopColor="#14608d" />
              <stop offset="1" stopColor="#8fb7cb" />
            </radialGradient>
          </defs>
          <circle cx="19" cy="18" r="17.500" fill="url(#orb)" stroke="#285468" strokeWidth=".7" />
          <path d="M11 8.500c3-2 5-2 8 0l-2 8.500c-3-2-5-2-8.500 0z" fill="#e9602b" />
          <path d="M20 9c3 2 5.500 2 8.500 0l-2 8.500c-3 2-5.500 2-8.500 0z" fill="#8ec63f" />
          <path d="M8.200 18.500c3-2 5.500-2 8.500 0l-2 8.500c-3-2-5-2-8.500 0z" fill="#3f9bdc" />
          <path d="M17.700 19c3 2 5.500 2 8.500 0l-2 8.500c-3 2-5.500 2-8.500 0z" fill="#fbc52d" />
          <path d="M3 13C7-1 31-1 35 13c-8 4-24 4-32 0z" fill="#fff" opacity=".2" />
        </svg>
      </div>
      <TaskButton>
        <svg className="h-4 w-4" viewBox="0 0 16 16"><circle cx="8" cy="8" r="8" fill="#61b346" /><path d="M3 5.500c4-1.200 7-.8 10 .8M3.500 8.300c3.500-1 6-.6 8.500.7M4 11c3-.8 5-.4 7 .5" fill="none" stroke="#17220f" strokeWidth="1.500" strokeLinecap="round" /></svg>
      </TaskButton>
      <TaskButton className="ml-[2px]">
        <svg className="h-4 w-4" viewBox="0 0 16 16"><circle cx="8" cy="8" r="7.500" fill="#e66b25" /><circle cx="8.500" cy="6.500" r="5" fill="#2f6fae" /><path d="M1 4c0 8 5 9 9 7-3 0-5-1-5-3l3-1-3-2-1-2z" fill="#d8412a" /><path d="M13 3c3 5 1 10-4 11 3-3 4-6 4-11z" fill="#f6b430" /></svg>
      </TaskButton>
      <TaskButton className="ml-[2px]">
        <svg className="h-4 w-4" viewBox="0 0 16 16"><path d="M.5.5h12l3 3v12H.5z" fill="#f3ecec" stroke="#a8a3a4" /><path d="M.5.5h13v1.500H2.500v13.500H.5z" fill="#b33136" /><path d="M4 13c3-3 4.500-6 4-9.500C8 7 10 10 14 11c-4-.5-7 .5-10 2z" fill="none" stroke="#c43238" strokeWidth="1.100" /></svg>
      </TaskButton>
      <TaskButton className="ml-[3px]">
        <svg className="h-4 w-[18px]" viewBox="0 0 18 16"><path d="M1 2h6l1 2h9v9H1z" fill="#e9cb72" stroke="#b79944" strokeWidth=".7" /><path d="M2 5h14v6H2z" fill="#f8e9a9" /><path d="M3 15V9.500C3 8 15 8 15 9.500V15h-3v-4H6v4z" fill="#49b4da" stroke="#2583ad" strokeWidth=".6" /></svg>
      </TaskButton>
      <TaskButton className="ml-[2px]">
        <svg className="h-4 w-[17px]" viewBox="0 0 17 16"><rect x=".5" y="1" width="16" height="11" rx="1" fill="#2c9ccc" stroke="#146990" /><circle cx="5.500" cy="6" r="2.500" fill="none" stroke="#fff" strokeWidth="1.300" /><path d="M10 4h4M10 6.500h4M10 9h4" stroke="#fff" /><circle cx="8" cy="13" r="2.500" fill="#dedede" stroke="#8a8a8a" strokeWidth=".6" /></svg>
      </TaskButton>
      <TaskButton className="ml-[2px]">
        <div className="h-[16px] w-[16px] border border-[#6b3b16] bg-[#351a0c] text-center text-[10px] leading-[13px] font-bold text-[#e99b32]">Ai</div>
      </TaskButton>
      <TaskButton className="ml-[2px]">
        <div className="h-[16px] w-[16px] border border-[#27406f] bg-[#1d2c66] text-center text-[9px] leading-[13px] text-[#9fc4ee]">Ps</div>
      </TaskButton>
      <div className="ml-auto flex h-[28px] items-center text-[12px] text-white">
        <div className="w-[31px] pb-[4px] font-light">ES</div>
        <div className="mt-[4px] -ml-[1px] h-0 w-0 border-x-[4px] border-b-[4px] border-x-transparent border-b-white drop-shadow-[0_0_1px_#555]" />
        <svg className="mt-[2px] ml-[12px] h-[14px] w-[16px]" viewBox="0 0 16 14"><path d="M0 1h14v13H0z" fill="#c4191f" /><path d="M2 12c4-3 5-6 4-8 0 4 3 6 6 6-4 0-7 0-10 2z" fill="none" stroke="#fff" opacity=".6" /><circle cx="12.500" cy="3" r="2.500" fill="#eee" stroke="#222" strokeWidth=".8" /></svg>
        <svg className="mt-[2px] ml-[14px] h-[16px] w-[18px]" viewBox="0 0 18 16"><path d="M5 0L0 3l3.500 3L0 9l5 3 4-3 4 3 4-3-3.500-3L17 3l-4-3-4 3z" fill="#40b4e8" stroke="#fff" strokeWidth=".6" /><path d="M9 3l4.500 3L9 9 4.500 6z" fill="#e5f6fd" /><path d="M4 12l5-2.500 4 3-4 3z" fill="#2a96cd" /><circle cx="13.500" cy="11.500" r="4" fill="#2f9e4e" /><path d="M11.500 11.500l1.500 1.500 2.500-3" fill="none" stroke="#fff" strokeWidth="1.200" /></svg>
        <svg className="mt-[2px] ml-[6px] h-[16px] w-[15px]" viewBox="0 0 15 16"><path d="M2 2h8v13H2zM4 0h4v2H4z" fill="none" stroke="#333" strokeWidth="2.600" /><path d="M2 2h8v13H2zM4 0h4v2H4z" fill="#8a8a8a" stroke="#fff" strokeWidth="1.300" /><path d="M7 6h7v3c0 2-7 2-7 0zM8.500 3v3M12.500 3v3M10.500 10v4" fill="#fff" stroke="#444" strokeWidth="1" /></svg>
        <svg className="mt-[2px] ml-[10px] h-[13px] w-[16px]" viewBox="0 0 16 13"><path d="M.5 10h2v2.500h-2zM3.800 8h2v4.500h-2zM7 5.500h2v7H7zM10.300 3h2v9.500h-2zM13.500.5h2v12h-2z" fill="#fff" stroke="#666" strokeWidth=".5" /></svg>
        <svg className="mt-[2px] ml-[8px] h-[14px] w-[14px]" viewBox="0 0 14 14"><path d="M.5 4.500H3L7 .8v12.400L3 9.500H.5z" fill="#fff" stroke="#555" strokeWidth=".8" /><path d="M9 4c1.500 2 1.500 4 0 6M11 2c3 3.500 3 6.500 0 10" fill="none" stroke="#fff" strokeWidth="1.300" /></svg>
        <div className="mt-[2px] ml-[34px] w-[54px] tracking-[-0.6px]">17:28</div>
        <div className="h-[29px] w-[24px] border-l border-[#7d7e7e] bg-linear-to-br from-[#8f9090] to-[#d2d2d2] shadow-[inset_1px_0_0_#c9c9c9]" />
      </div>
    </div>
  );
}

export default function App() {
  return (
    <div className="relative h-[1028px] w-[1370px] overflow-hidden bg-white font-['Noto_Sans',sans-serif]">
      <div className="flex h-[129px] items-start justify-center pt-[32px] pl-[23px]">
        <h1 className="font-['Open_Sans',sans-serif] text-[38.500px] leading-[52px] font-semibold tracking-[1.2px] text-[#db328c] italic [-webkit-text-stroke:0.6px_#db328c]">RESOLUTION AND PPI</h1>
      </div>
      <MenuBar />
      <OptionsBar />
      <div className="flex h-[677px] bg-[#262229]">
        <Toolbox />
        <div className="flex-1 border-l-2 border-[#1f1c21]" />
        <Dock />
        <Panels />
      </div>
      <Taskbar />
      <Dialog />
      <div className="absolute top-[356px] left-[460px] h-[95px] w-[366px] rounded-[27px/48px] border-[3px] border-[#c9348a]" />
    </div>
  );
}
